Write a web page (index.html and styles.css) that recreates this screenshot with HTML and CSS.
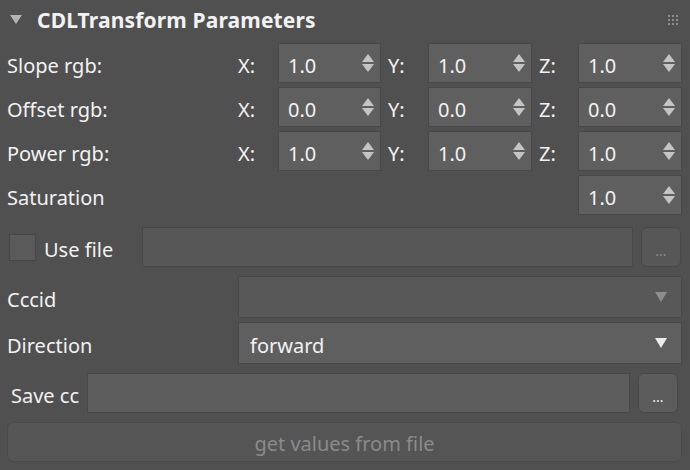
FILE: index.html
```html
<!DOCTYPE html>
<html lang="en">
<head>
  <meta charset="UTF-8" />
  <title>CDLTransform Parameters</title>
  <link rel="stylesheet" href="styles.css">
</head>
<body>
  <div class="panel">
    <div class="panel-header">
      <span class="caret"></span>
      <h2>CDLTransform Parameters</h2>
      <span class="grip">
        <i></i><i></i><i></i><i></i><i></i><i></i><i></i><i></i><i></i>
      </span>
    </div>

    <div class="params">
      <!-- slope / offset / power -->
      <div class="vec-row">
        <span class="label">Slope rgb:</span>
        <span class="axis">X:</span>
        <div class="spin"><span>1.0</span><b class="arrows"></b></div>
        <span class="axis">Y:</span>
        <div class="spin"><span>1.0</span><b class="arrows"></b></div>
        <span class="axis">Z:</span>
        <div class="spin"><span>1.0</span><b class="arrows"></b></div>
      </div>
      <div class="vec-row">
        <span class="label">Offset rgb:</span>
        <span class="axis">X:</span>
        <div class="spin"><span>0.0</span><b class="arrows"></b></div>
        <span class="axis">Y:</span>
        <div class="spin"><span>0.0</span><b class="arrows"></b></div>
        <span class="axis">Z:</span>
        <div class="spin"><span>0.0</span><b class="arrows"></b></div>
      </div>
      <div class="vec-row">
        <span class="label">Power rgb:</span>
        <span class="axis">X:</span>
        <div class="spin"><span>1.0</span><b class="arrows"></b></div>
        <span class="axis">Y:</span>
        <div class="spin"><span>1.0</span><b class="arrows"></b></div>
        <span class="axis">Z:</span>
        <div class="spin"><span>1.0</span><b class="arrows"></b></div>
      </div>
      <div class="vec-row">
        <span class="label">Saturation</span>
        <div class="spin sat"><span>1.0</span><b class="arrows"></b></div>
      </div>

      <div class="file-row">
        <span class="check"></span>
        <span class="check-label">Use file</span>
        <div class="field dim"></div>
        <button class="browse" disabled>...</button>
      </div>

      <div class="combo-row">
        <span class="label">Cccid</span>
        <div class="combo disabled"><span></span><b class="down"></b></div>
      </div>
      <div class="combo-row">
        <span class="label">Direction</span>
        <div class="combo"><span>forward</span><b class="down"></b></div>
      </div>

      <div class="save-row">
        <span class="save-label">Save cc</span>
        <div class="field"></div>
        <button class="browse">...</button>
      </div>

      <button class="wide-btn" disabled>get values from file</button>
    </div>
  </div>
</body>
</html>
```

FILE: styles.css
```css
* {
  box-sizing: border-box;
}

body {
  margin: 0;
  background: #505050;
  font-family: 'Noto Sans', 'Open Sans', sans-serif;
  font-size: 20px;
  color: #f2f2f2;
  width: 690px;
  height: 470px;
  overflow: hidden;
}

.panel-header {
  height: 39px;
  display: flex;
  align-items: center;
  padding: 0 12px 0 10px;
}

.caret {
  width: 0;
  height: 0;
  border-left: 6px solid transparent;
  border-right: 6px solid transparent;
  border-top: 9px solid #b4b4b4;
  margin-right: 15px;
  margin-top: -1px;
}

h2 {
  margin: 0;
  font-size: 21px;
  font-weight: bold;
  flex: 1;
  letter-spacing: 0.15px;
}

.grip {
  display: grid;
  grid-template-columns: repeat(3, 2px);
  gap: 2px;
}

.grip i {
  width: 2px;
  height: 2px;
  background: #8c8c8c;
}

.params {
  padding: 4px 8px 0 7px;
}

.vec-row {
  display: grid;
  grid-template-columns: 1fr 40px 103px 47px 104px 46px 104px;
  height: 40px;
  margin-bottom: 4px;
  align-items: center;
}

/* texts sit a touch below the box centre */
.label,
.axis,
.spin span,
.combo span,
.check-label,
.save-label {
  padding-top: 4px;
}

.axis {
  height: 100%;
  display: flex;
  align-items: center;
}

.axis:nth-child(n+4) {
  padding-left: 7px;
}

.spin {
  height: 40px;
  background: #5f5f5f;
  border: 1px solid #484848;
  display: flex;
  align-items: center;
  justify-content: space-between;
  padding: 0 6px 0 9px;
}

.spin.sat {
  grid-column: 7;
}

.arrows {
  width: 12px;
  height: 20px;
  position: relative;
}

.arrows::before,
.arrows::after {
  content: '';
  position: absolute;
  left: 0;
  border-left: 6px solid transparent;
  border-right: 6px solid transparent;
}

.arrows::before {
  top: 1px;
  border-bottom: 8px solid #c4c4c4;
}

.arrows::after {
  bottom: 1px;
  border-top: 8px solid #c4c4c4;
}

.file-row,
.save-row {
  display: flex;
  align-items: center;
  height: 40px;
  gap: 8px;
}

.file-row {
  margin-top: 12px;
}

.check {
  width: 27px;
  height: 27px;
  background: #5a5a5a;
  border: 1px solid #474747;
  margin-left: 2px;
}

.check-label {
  width: 90px;
}

.field {
  flex: 1;
  height: 40px;
  background: #5d5d5d;
  border: 1px solid #474747;
}

.field.dim {
  background: #575757;
}

.browse {
  width: 40px;
  height: 40px;
  border: 1px solid #484848;
  border-radius: 6px;
  background: #5c5c5c;
  color: #f2f2f2;
  font-family: inherit;
  font-size: 14px;
  padding: 6px 0 0;
  flex: none;
}

.browse:disabled {
  background: #575757;
  color: #8c8c8c;
}

.file-row .browse {
  margin-right: 1px;
}

.save-row .browse {
  margin-right: 4px;
}

.combo-row {
  display: flex;
  align-items: center;
  height: 42px;
  margin-top: 4px;
}

.file-row + .combo-row {
  margin-top: 9px;
}

.combo-row .label {
  width: 231px;
}

.combo {
  flex: 1;
  height: 42px;
  background: #5f5f5f;
  border: 1px solid #484848;
  display: flex;
  align-items: center;
  justify-content: space-between;
  padding: 0 14px 0 11px;
}

.combo.disabled {
  background: #585858;
}

.down {
  border-left: 6px solid transparent;
  border-right: 6px solid transparent;
  border-top: 10px solid #ededed;
}

.combo.disabled .down {
  border-top-color: #8e8e8e;
}

.save-row {
  margin-top: 9px;
}

.save-label {
  padding-left: 4px;
  margin-right: 0;
}

.wide-btn {
  display: block;
  width: 100%;
  height: 40px;
  margin-top: 9px;
  padding-top: 3px;
  background: #555555;
  border: 1px solid #4a4a4a;
  border-radius: 6px;
  color: #8a8a8a;
  font-family: inherit;
  font-size: 20px;
}
```
